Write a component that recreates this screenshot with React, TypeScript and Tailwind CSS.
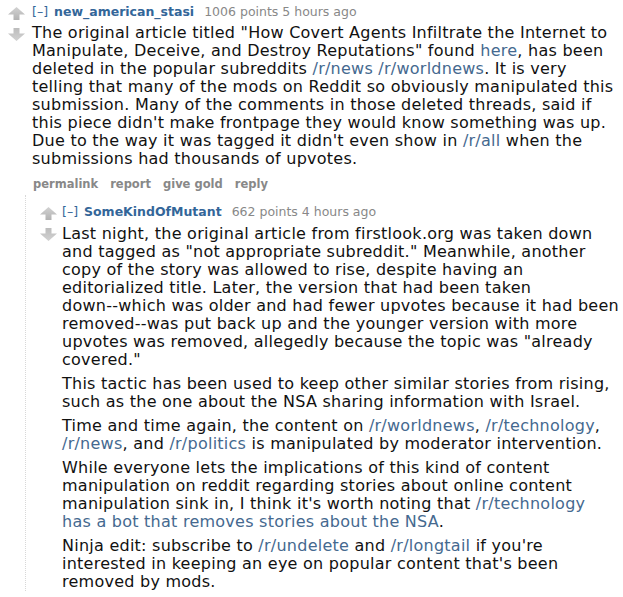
import React from "react";

const font = "font-['Verdana','DejaVu_Sans',sans-serif]";

function Arrow({ down = false }: { down?: boolean }) {
  const id = down ? "gd" : "gu";
  return (
    <svg width="17" height="13" viewBox="0 0 17 13" className="block">
      <defs>
        <linearGradient id={id} x1="0" y1="0" x2="0" y2="1">
          <stop offset="0" stopColor={down ? "#bcbcbc" : "#d2d2d2"} />
          <stop offset="1" stopColor={down ? "#d2d2d2" : "#b2b2b2"} />
        </linearGradient>
      </defs>
      <polygon
        points={
          down
            ? "5.5,0 11.5,0 11.5,5.5 17,5.5 8.5,13 0,5.5 5.5,5.5"
            : "8.5,0 17,7.5 11.5,7.5 11.5,13 5.5,13 5.5,7.5 0,7.5"
        }
        fill={`url(#${id})`}
      />
    </svg>
  );
}

function Link({ children }: { children: React.ReactNode }) {
  return <span className="text-[#45698f]">{children}</span>;
}

function Tagline({ user, points, time }: { user: string; points: string; time: string }) {
  return (
    <div className="text-[12.5px] leading-[16px] flex items-baseline whitespace-nowrap">
      <span className="text-[#369]">[–]</span>
      <span className="ml-[6px] font-bold text-[#336699]">{user}</span>
      <span className="ml-[10px] text-[#888]">
        {points} points {time}
      </span>
    </div>
  );
}

const body = "text-[16px] leading-[18px] tracking-[0.25px]";

export default function App() {
  return (
    <div className={`w-[623px] h-[597px] bg-white overflow-hidden text-[#111] ${font}`}>
      {/* parent comment */}
      <div className="flex pl-[8px]">
        <div className="w-[24px] shrink-0 pt-[7px] flex flex-col gap-[8px]">
          <Arrow />
          <Arrow down />
        </div>
        <div className="flex-1 pr-[2px] pt-[4px]">
          <Tagline user="new_american_stasi" points="1006" time="5 hours ago" />
          <div className={`${body} mt-[4px]`}>
            <p>
              The original article titled "How Covert Agents Infiltrate the Internet to Manipulate,
              Deceive, and Destroy Reputations" found <Link>here</Link>, has been deleted in the
              popular subreddits <Link>/r/news</Link> <Link>/r/worldnews</Link>. It is very telling
              that many of the mods on Reddit so obviously manipulated this submission. Many of the
              comments in those deleted threads, said if this piece didn't make frontpage they would
              know something was up. Due to the way it was tagged it didn't even show in{" "}
              <Link>/r/all</Link> when the submissions had thousands of upvotes.
            </p>
          </div>
          <div className="flex gap-[12px] text-[11.5px] leading-[16px] font-bold text-[#888] mt-[8px] pl-[1px]">
            <span>permalink</span>
            <span>report</span>
            <span>give gold</span>
            <span>reply</span>
          </div>
        </div>
      </div>

      {/* child comment */}
      <div className="ml-[25px] mt-[3px] border-l border-dotted border-[#d8d8d8] flex pl-[14px]">
        <div className="w-[22px] shrink-0 pt-[12px] flex flex-col gap-[8px]">
          <Arrow />
          <Arrow down />
        </div>
        <div className="flex-1 pt-[9px]">
          <Tagline user="SomeKindOfMutant" points="662" time="4 hours ago" />
          <div className={`${body} mt-[5px] flex flex-col gap-[6px]`}>
            <p>
              Last night, the original article from firstlook.org was taken down and tagged as "not
              appropriate subreddit." Meanwhile, another copy of the story was allowed to rise,
              despite having an editorialized title. Later, the version that had been taken{" "}
              <span className="whitespace-nowrap">down--which</span> was older and had fewer upvotes
              because it had been <span className="whitespace-nowrap">removed--was</span> put back
              up and the younger version with more upvotes was removed, allegedly because the topic
              was "already covered."
            </p>
            <p>
              This tactic has been used to keep other similar stories from rising, such as the one
              about the NSA sharing information with Israel.
            </p>
            <p>
              Time and time again, the content on <Link>/r/worldnews</Link>,{" "}
              <Link>/r/technology</Link>, <Link>/r/news</Link>, and <Link>/r/politics</Link> is
              manipulated by moderator intervention.
            </p>
            <p>
              While everyone lets the implications of this kind of content manipulation on reddit
              regarding stories about online content manipulation sink in, I think it's worth noting
              that <Link>/r/technology has{"\u00a0"}a bot that removes stories about the NSA</Link>.
            </p>
            <p>
              Ninja edit: subscribe to <Link>/r/undelete</Link> and <Link>/r/longtail</Link> if
              you're interested in keeping an eye on popular content that's been removed by mods.
            </p>
          </div>
        </div>
      </div>
    </div>
  );
}
